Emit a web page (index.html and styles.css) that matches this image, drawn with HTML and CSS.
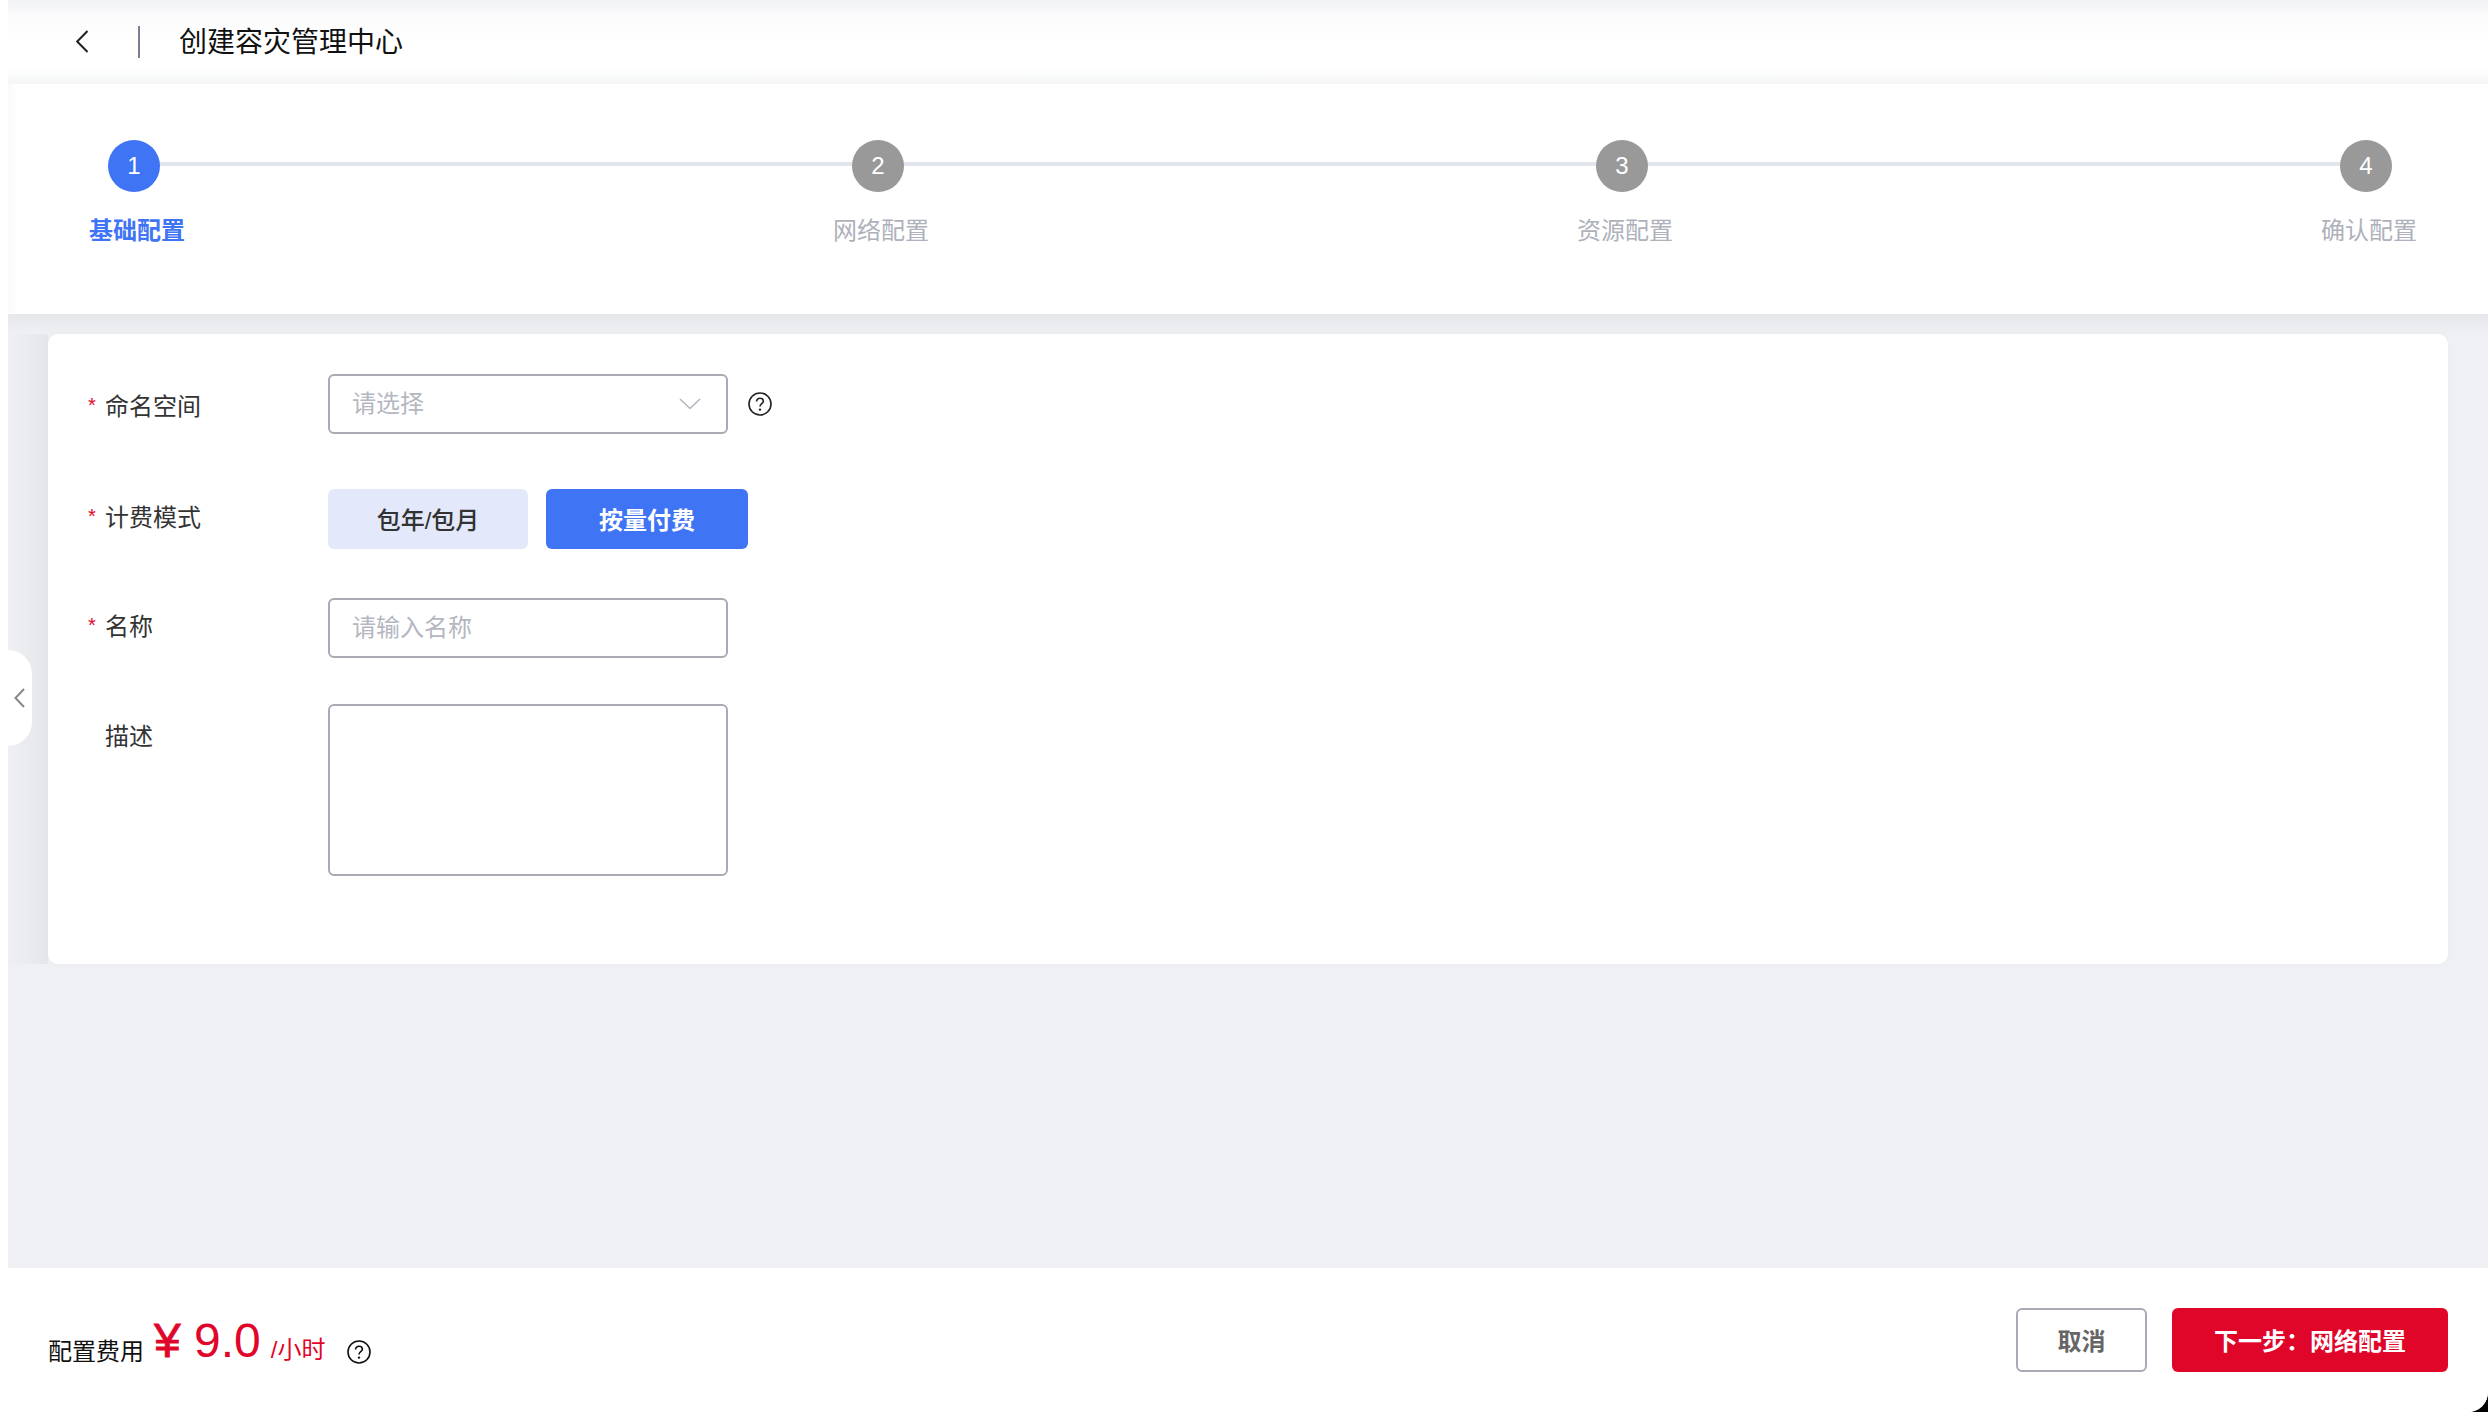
FILE: index.html
```html
<!DOCTYPE html>
<html lang="zh-CN">
<head>
<meta charset="utf-8">
<title>创建容灾管理中心</title>
<link rel="stylesheet" href="styles.css">
</head>
<body>
<div class="page">
  <header class="topbar">
    <button class="back" type="button" aria-label="返回">
      <svg width="12" height="24" viewBox="0 0 12 24"><path d="M11.5 1 L1.2 11.5 L11.5 22" fill="none" stroke="#222" stroke-width="2"/></svg>
    </button>
    <span class="divider"></span>
    <h1 class="title">创建容灾管理中心</h1>
  </header>

  <section class="stepsbar">
    <ol class="steps">
      <li class="step active"><span class="dot">1</span><span class="step-label">基础配置</span></li>
      <li class="step"><span class="dot">2</span><span class="step-label">网络配置</span></li>
      <li class="step"><span class="dot">3</span><span class="step-label">资源配置</span></li>
      <li class="step"><span class="dot">4</span><span class="step-label">确认配置</span></li>
    </ol>
  </section>

  <main class="content">
    <button class="collapse" type="button" aria-label="收起">
      <svg width="11" height="20" viewBox="0 0 11 20"><path d="M10 1 L1.5 10 L10 19" fill="none" stroke="#888" stroke-width="2"/></svg>
    </button>
    <form class="card">
      <div class="row row-ns">
        <label class="label req">命名空间</label>
        <div class="select">
          <span class="placeholder">请选择</span>
          <svg width="22" height="12" viewBox="0 0 22 12"><path d="M1 1 L11 10.5 L21 1" fill="none" stroke="#b4b7bf" stroke-width="1.6"/></svg>
        </div>
        <svg class="help" width="24" height="24" viewBox="0 0 24 24"><circle cx="12" cy="12" r="11" fill="none" stroke="#222" stroke-width="1.6"/><path d="M8.6 9.4 C8.6 7.4 10.1 6.2 12 6.2 C13.9 6.2 15.4 7.4 15.4 9.2 C15.4 11.6 12 11.8 12 14.4" fill="none" stroke="#222" stroke-width="1.6"/><circle cx="12" cy="17.6" r="1.2" fill="#222"/></svg>
      </div>
      <div class="row row-bill">
        <label class="label req">计费模式</label>
        <div class="seg">
          <button class="seg-btn" type="button">包年/包月</button>
          <button class="seg-btn on" type="button">按量付费</button>
        </div>
      </div>
      <div class="row row-name">
        <label class="label req">名称</label>
        <div class="input"><span class="placeholder">请输入名称</span></div>
      </div>
      <div class="row row-desc">
        <label class="label">描述</label>
        <div class="textarea"></div>
      </div>
    </form>
  </main>

  <footer class="footer">
    <div class="cost">
      <span class="cost-label">配置费用</span>
      <span class="price"><span class="yen">¥</span> 9.0</span>
      <span class="unit">/小时</span>
      <svg class="help" width="24" height="24" viewBox="0 0 24 24"><circle cx="12" cy="12" r="11" fill="none" stroke="#111" stroke-width="1.6"/><path d="M8.6 9.4 C8.6 7.4 10.1 6.2 12 6.2 C13.9 6.2 15.4 7.4 15.4 9.2 C15.4 11.6 12 11.8 12 14.4" fill="none" stroke="#111" stroke-width="1.6"/><circle cx="12" cy="17.6" r="1.2" fill="#111"/></svg>
    </div>
    <div class="actions">
      <button class="btn btn-cancel" type="button">取消</button>
      <button class="btn btn-next" type="button">下一步&#xFF1A;网络配置</button>
    </div>
  </footer>
</div>
</body>
</html>
```

FILE: styles.css
```css
* { box-sizing: border-box; }
html, body { margin: 0; height: 100%; }
body {
  background: #000;
  font-family: "Liberation Sans", "Noto Sans CJK SC", sans-serif;
  color: #333;
  overflow: hidden;
}
button { font: inherit; border: 0; padding: 0; background: none; }

.page {
  height: 1412px;
  background: #fff;
  display: flex;
  flex-direction: column;
  border-bottom-right-radius: 20px;
  overflow: hidden;
}

.topbar {
  height: 84px;
  margin-left: 8px;
  display: flex;
  align-items: center;
  padding-left: 68px;
  background: linear-gradient(#f1f2f5 0, #fbfbfc 16px, #fff 40px, #fff 68px, #f4f5f7 84px);
}
.back { width: 12px; height: 24px; display: flex; margin-right: 50px; }
.divider { width: 2px; height: 32px; background: #7a7f95; margin-right: 39px; }
.title { margin: 2px 0 0; font-size: 28px; line-height: 36px; font-weight: 400; color: #111; }

.stepsbar {
  height: 230px;
  margin-left: 8px;
  padding: 56px 71px 0 81px;
  background: linear-gradient(90deg, #fafafb 0, #fff 10px);
}
.steps {
  list-style: none;
  margin: 0;
  padding: 0;
  display: flex;
  justify-content: space-between;
  position: relative;
}
.steps::before {
  content: "";
  position: absolute;
  left: 50px;
  right: 60px;
  top: 22px;
  height: 4px;
  background: #e3e5ed;
}
.step {
  width: 96px;
  display: flex;
  flex-direction: column;
  align-items: flex-start;
  position: relative;
}
.dot {
  width: 52px;
  height: 52px;
  margin-left: 19px;
  border-radius: 50%;
  background: #999;
  color: #fff;
  font-size: 24px;
  line-height: 52px;
  text-align: center;
}
.step.active .dot { background: #3f74f5; }
.step-label {
  margin-top: 23px;
  font-size: 24px;
  line-height: 32px;
  color: #aeb1ba;
  white-space: nowrap;
}
.step.active .step-label { color: #3f74f5; font-weight: 700; }

.content {
  flex: 1;
  margin-left: 8px;
  padding: 20px 40px 0;
  background: #eff0f4;
  background-image:
    linear-gradient(#e6e7eb, #eff0f4 20px),
    linear-gradient(90deg, #eff0f4, #e5e6ea 40px);
  background-size: 100% 20px, 40px 650px;
  background-repeat: no-repeat;
  background-position: 0 0, 0 0;
  position: relative;
}
.collapse {
  position: absolute;
  left: 0;
  top: 336px;
  width: 24px;
  height: 96px;
  background: #fff;
  border-radius: 0 24px 24px 0;
  display: flex;
  align-items: center;
  padding-left: 6px;
}
.card {
  height: 630px;
  background: #fff;
  border-radius: 10px;
  padding: 40px 0 0 40px;
  box-shadow: 0 0 8px rgba(0, 0, 0, .02);
}
.row { display: flex; align-items: flex-start; }
.row-bill { margin-top: 55px; }
.row-name { margin-top: 49px; }
.row-desc { margin-top: 46px; }
.label {
  width: 240px;
  padding-left: 17px;
  font-size: 24px;
  line-height: 32px;
  color: #333;
  position: relative;
  flex: none;
}
.label.req::before {
  content: "*";
  position: absolute;
  left: 0;
  top: 0;
  color: #e0062a;
  font-size: 20px;
  line-height: 28px;
}
.row-ns .label { margin-top: 17px; }
.row-bill .label { margin-top: 13px; }
.row-name .label { margin-top: 13px; }
.row-desc .label { margin-top: 17px; }
.select, .input, .textarea {
  width: 400px;
  height: 60px;
  border: 2px solid #a8abb5;
  border-radius: 6px;
  background: #fff;
  display: flex;
  align-items: center;
  padding: 0 25px 0 22px;
}
.select { justify-content: space-between; }
.textarea { height: 172px; }
.placeholder { font-size: 24px; line-height: 32px; color: #b4b7bf; }
.row-ns .help { margin: 18px 0 0 20px; }
.seg { display: flex; gap: 18px; }
.seg-btn {
  width: 200px;
  height: 60px;
  padding-bottom: 2px;
  border-radius: 6px;
  background: #e3e9fa;
  color: #333;
  font-size: 24px;
  font-weight: 500;
}
.seg-btn.on { width: 202px; background: #3f74f5; color: #fff; font-weight: 700; }

.footer {
  height: 144px;
  flex: none;
  background: #fff;
  display: flex;
  justify-content: space-between;
  padding: 40px 40px 0 48px;
}
.cost { display: flex; align-items: flex-start; height: 64px; }
.cost-label { font-size: 24px; color: #111; line-height: 32px; margin-top: 28px; }
.price { font-size: 48px; color: #e0062a; margin: 5px 0 0 10px; line-height: 56px; }
.yen { -webkit-text-stroke: .8px #e0062a; }
.unit { font-size: 24px; color: #e0062a; margin: 26px 0 0 10px; line-height: 32px; }
.cost .help { margin: 32px 0 0 22px; }
.actions { display: flex; gap: 25px; }
.btn {
  height: 64px;
  padding-bottom: 2px;
  border-radius: 6px;
  font-size: 24px;
  font-weight: 700;
}
.btn-cancel { width: 131px; border: 2px solid #a8abb5; color: #666; background: #fff; }
.btn-next { width: 276px; background: #e0062a; color: #fff; }
```
